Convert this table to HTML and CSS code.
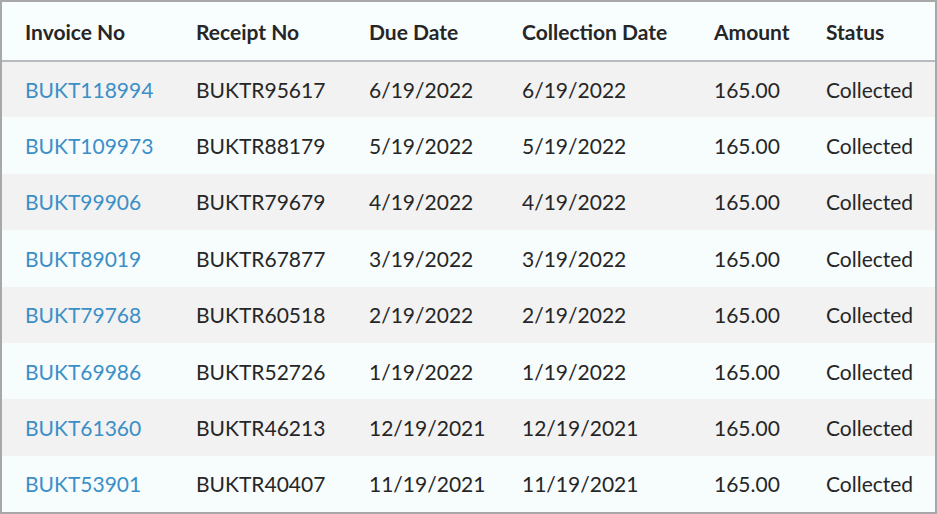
FILE: index.html
```html
<!DOCTYPE html>
<html>
<head>
<meta charset="utf-8">
<link rel="stylesheet" href="styles.css">
</head>
<body>
<div class="frame">
<table class="grid">
<colgroup>
<col class="c1"><col class="c2"><col class="c3"><col class="c4"><col class="c5"><col class="c6">
</colgroup>
<thead>
<tr><th>Invoice No</th><th>Receipt No</th><th>Due Date</th><th>Collection Date</th><th>Amount</th><th>Status</th></tr>
</thead>
<tbody>
<tr><td><a class="link">BUKT118994</a></td><td>BUKTR95617</td><td>6/19/2022</td><td>6/19/2022</td><td>165.00</td><td>Collected</td></tr>
<tr><td><a class="link">BUKT109973</a></td><td>BUKTR88179</td><td>5/19/2022</td><td>5/19/2022</td><td>165.00</td><td>Collected</td></tr>
<tr><td><a class="link">BUKT99906</a></td><td>BUKTR79679</td><td>4/19/2022</td><td>4/19/2022</td><td>165.00</td><td>Collected</td></tr>
<tr><td><a class="link">BUKT89019</a></td><td>BUKTR67877</td><td>3/19/2022</td><td>3/19/2022</td><td>165.00</td><td>Collected</td></tr>
<tr><td><a class="link">BUKT79768</a></td><td>BUKTR60518</td><td>2/19/2022</td><td>2/19/2022</td><td>165.00</td><td>Collected</td></tr>
<tr><td><a class="link">BUKT69986</a></td><td>BUKTR52726</td><td>1/19/2022</td><td>1/19/2022</td><td>165.00</td><td>Collected</td></tr>
<tr><td><a class="link">BUKT61360</a></td><td>BUKTR46213</td><td>12/19/2021</td><td>12/19/2021</td><td>165.00</td><td>Collected</td></tr>
<tr><td><a class="link">BUKT53901</a></td><td>BUKTR40407</td><td>11/19/2021</td><td>11/19/2021</td><td>165.00</td><td>Collected</td></tr>
</tbody>
</table>
</div>
</body>
</html>
```
FILE: styles.css
```css
html, body {
  margin: 0;
  padding: 0;
  background: #ffffff;
}
.frame {
  width: 937px;
  height: 514px;
  box-sizing: border-box;
  border: 2px solid #a8a8a8;
  background: #f7fcfd;
  overflow: hidden;
}
.grid {
  width: 100%;
  border-collapse: collapse;
  table-layout: fixed;
  font-family: Lato, "Open Sans", sans-serif;
  font-size: 21px;
  color: #262626;
}
.c1 { width: 171px; }
.c2 { width: 173px; }
.c3 { width: 153px; }
.c4 { width: 192px; }
.c5 { width: 112px; }
.c6 { width: auto; }
.grid th {
  height: 59px;
  padding: 0 0 0 23px;
  box-sizing: border-box;
  text-align: left;
  font-weight: 700;
  background: #f8fdfe;
  border-bottom: 2px solid #b7bbbf;
  white-space: nowrap;
}
.grid td {
  height: 56.375px;
  padding: 0 0 0 23px;
  box-sizing: border-box;
  white-space: nowrap;
}
.grid tbody tr:nth-child(odd) td {
  background: #f2f2f2;
}
.grid tbody tr:nth-child(even) td {
  background: #f7fcfd;
}
.link {
  color: #3b8fc7;
  text-decoration: none;
}
```
